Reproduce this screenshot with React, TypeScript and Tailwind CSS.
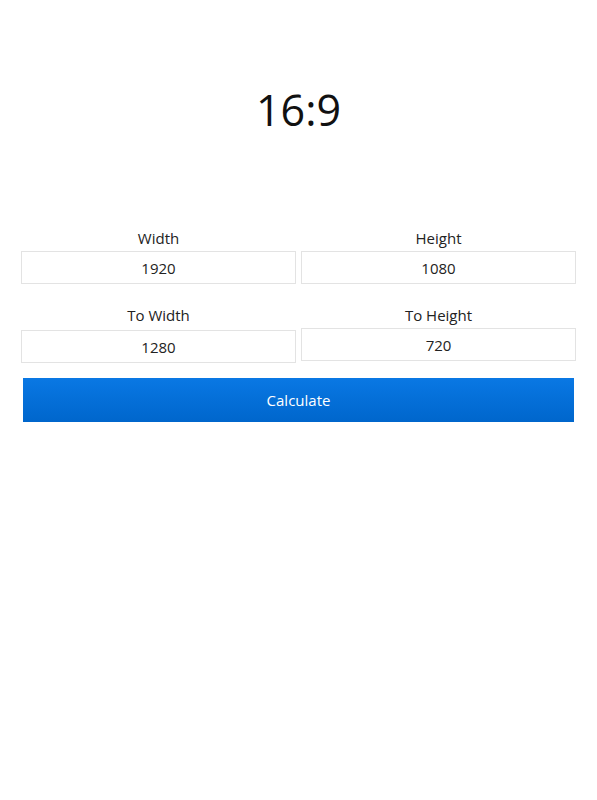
import React from "react";

function Field({ label, value, mt }: { label: string; value: string; mt: string }) {
  return (
    <div className="flex flex-col items-stretch">
      <label className="text-center text-[15px] leading-5 text-[#222]">{label}</label>
      <input
        readOnly
        value={value}
        className={`${mt} h-[33px] w-full border border-[#e3e3e3] bg-white text-center text-[15px] text-[#222] outline-none`}
        style={{ fontFamily: '"Open Sans", sans-serif' }}
      />
    </div>
  );
}

export default function App() {
  return (
    <div className="min-h-[800px] bg-white px-[21px]" style={{ fontFamily: '"Open Sans", sans-serif' }}>
      <h1 className="pt-[84px] text-center text-[43px] leading-[52px] text-[#111]">16:9</h1>
      <div className="mt-[92px] grid grid-cols-2 gap-x-[5px]">
        <Field label="Width" value="1920" mt="mt-[3px]" />
        <Field label="Height" value="1080" mt="mt-[3px]" />
        <div className="mt-[21px]">
          <Field label="To Width" value="1280" mt="mt-[5px]" />
        </div>
        <div className="mt-[21px]">
          <Field label="To Height" value="720" mt="mt-[3px]" />
        </div>
      </div>
      <div className="px-[2px] mt-[15px]">
        <button className="h-[44px] w-full bg-gradient-to-b from-[#0a78e4] to-[#0066cc] text-[15px] text-white">
          Calculate
        </button>
      </div>
    </div>
  );
}
